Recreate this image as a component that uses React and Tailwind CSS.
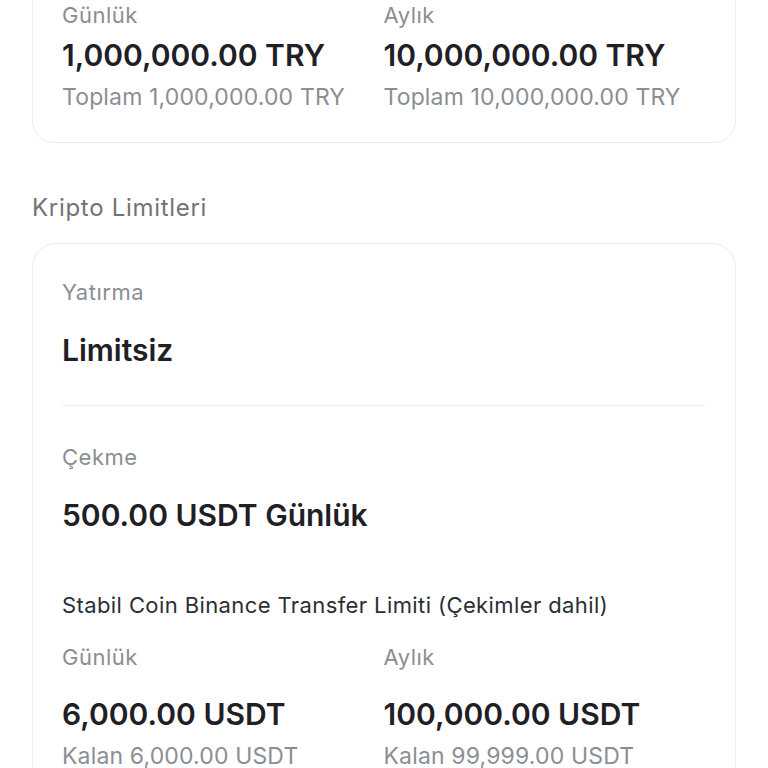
const label = 'text-[22px] leading-[24px] tracking-[0.5px] text-[#8b8e94]'
const value = 'text-[30px] leading-[34px] font-semibold text-[#1e2026]'
const sub = 'text-[23px] leading-[26px] tracking-[0.15px] text-[#8b8e94]'

function LimitPair({ items, gap }) {
  return (
    <div className="grid grid-cols-2">
      {items.map((it) => (
        <div key={it.label} className="flex flex-col">
          <span className={label}>{it.label}</span>
          <span className={`${gap} ${value}`}>{it.value}</span>
          <span className={`mt-[12px] ${sub}`}>{it.sub}</span>
        </div>
      ))}
    </div>
  )
}

export default function App() {
  return (
    <div className="min-h-[768px] bg-white overflow-hidden px-[32px] font-['Inter','Noto_Sans',sans-serif]">
      {/* Fiat limits card (scrolled, top cut off) */}
      <div className="-mt-[40px] rounded-[22px] border-[1.5px] border-[#ececee] pt-[42px] pb-[32px] pl-[29px] pr-[30px]">
        <LimitPair
          gap="mt-[11px]"
          items={[
            { label: 'Günlük', value: '1,000,000.00 TRY', sub: 'Toplam 1,000,000.00 TRY' },
            { label: 'Aylık', value: '10,000,000.00 TRY', sub: 'Toplam 10,000,000.00 TRY' },
          ]}
        />
      </div>

      <h2 className="mt-[51px] text-[24px] leading-[28px] tracking-[0.7px] text-[#70747a]">Kripto Limitleri</h2>

      <div className="mt-[21px] rounded-[24px] border-[1.5px] border-[#ececee] pt-[36px] pl-[29px] pr-[30px] pb-[40px]">
        <div className={label}>Yatırma</div>
        <div className={`mt-[29px] ${value}`}>Limitsiz</div>
        <div className="mt-[38px] h-px bg-[#efeff1]" />
        <div className={`mt-[39px] ${label}`}>Çekme</div>
        <div className={`mt-[29px] ${value}`}>500.00 USDT Günlük</div>
        <div className="mt-[61px] text-[22px] leading-[24px] tracking-[0.4px] text-[#2b2e33]">
          Stabil Coin Binance Transfer Limiti (Çekimler dahil)
        </div>
        <div className="mt-[28px]">
          <LimitPair
            gap="mt-[28px]"
            items={[
              { label: 'Günlük', value: '6,000.00 USDT', sub: 'Kalan 6,000.00 USDT' },
              { label: 'Aylık', value: '100,000.00 USDT', sub: 'Kalan 99,999.00 USDT' },
            ]}
          />
        </div>
      </div>
    </div>
  )
}
